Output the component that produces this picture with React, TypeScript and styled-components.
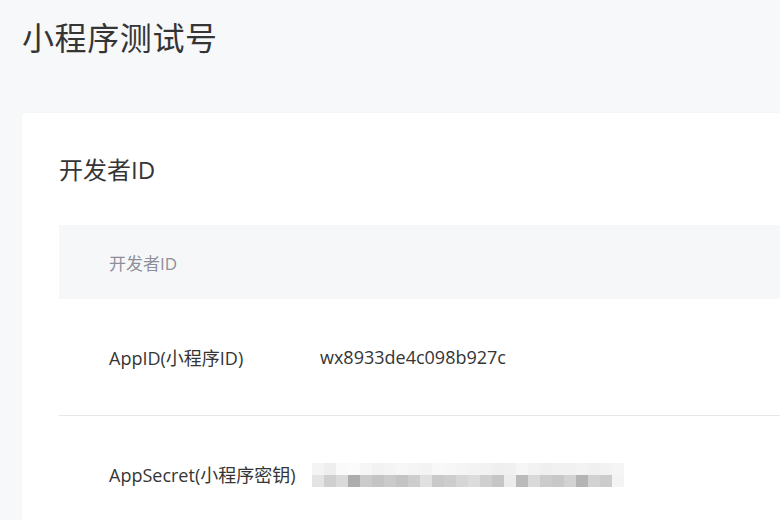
import styled, { createGlobalStyle } from "styled-components";

const GlobalStyle = createGlobalStyle`
  html, body {
    margin: 0;
    padding: 0;
    background: #f7f8fa;
    font-family: "Open Sans", "Noto Sans CJK SC", sans-serif;
    color: #353535;
    overflow: hidden;
  }
`;

const rows = [
  { label: "AppID(小程序ID)", value: "wx8933de4c098b927c" },
  { label: "AppSecret(小程序密钥)", secret: true },
];

// grey shades of the pixelated secret (top row, bottom row)
const topShades = [
  "#f4f4f4", "#eeeeee", "#fafafa", "#fbfbfb", "#f6f6f6", "#f2f2f2", "#f4f4f4",
  "#f7f7f7", "#f5f5f5", "#f3f3f3", "#f8f8f8", "#f7f7f7", "#f5f5f5", "#f3f3f3",
  "#f2f2f2", "#efefef", "#f0f0f0", "#f6f6f6", "#f2f2f2", "#efefef", "#f1f1f1",
  "#f1f1f1", "#f3f3f3", "#f0f0f0", "#f2f2f2", "#f5f5f5",
];
const bottomShades = [
  "#e4e4e4", "#cfcfcf", "#dadada", "#adadad", "#cbcbcb", "#c4c4c4", "#cacaca",
  "#c4c4c4", "#cdcdcd", "#e0e0e0", "#c9c9c9", "#cdcdcd", "#d6d6d6", "#dcdcdc",
  "#cfcfcf", "#c6c6c6", "#ececec", "#bababa", "#d9d9d9", "#cbcbcb", "#c8c8c8",
  "#d2d2d2", "#b4b4b4", "#d2d2d2", "#cccccc", "#f4f4f4",
];

export default function App() {
  return (
    <Page>
      <GlobalStyle />
      <PageTitle>小程序测试号</PageTitle>
      <Card>
        <SectionTitle>开发者ID</SectionTitle>
        <Table>
          <HeadRow>
            <HeadCell>开发者ID</HeadCell>
          </HeadRow>
          {rows.map((r, i) => (
            <Row key={r.label} last={i === rows.length - 1}>
              <Label>{r.label}</Label>
              {r.secret ? (
                <Mosaic>
                  <MosaicLine>
                    {topShades.map((c, j) => (
                      <Block key={j} style={{ background: c }} />
                    ))}
                  </MosaicLine>
                  <MosaicLine>
                    {bottomShades.map((c, j) => (
                      <Block key={j} style={{ background: c }} />
                    ))}
                  </MosaicLine>
                </Mosaic>
              ) : (
                <Value>{r.value}</Value>
              )}
            </Row>
          ))}
        </Table>
      </Card>
    </Page>
  );
}

const Page = styled.div`
  width: 780px;
  height: 520px;
  padding: 16px 0 0 22px;
  box-sizing: border-box;
`;

const PageTitle = styled.h1`
  margin: 0;
  font-size: 32px;
  font-weight: 400;
  line-height: 44px;
  letter-spacing: 0.6px;
  color: #353535;
`;

const Card = styled.div`
  margin-top: 53px;
  background: #fff;
  border-radius: 4px 0 0 0;
  padding: 37px 0 0 37px;
  box-shadow: 0 0 2px rgba(0, 0, 0, 0.03);
`;

const SectionTitle = styled.h2`
  margin: 0;
  font-size: 24px;
  font-weight: 400;
  line-height: 40px;
  color: #353535;
`;

const Table = styled.div`
  margin-top: 35px;
`;

const HeadRow = styled.div`
  height: 74px;
  background: #f6f7f9;
  display: flex;
  align-items: center;
  padding-left: 50px;
`;

const HeadCell = styled.div`
  font-size: 17px;
  color: #8d9099;
`;

const Row = styled.div<{ last?: boolean }>`
  height: 116px;
  display: flex;
  align-items: center;
  padding-left: 50px;
  border-bottom: ${({ last }) => (last ? "none" : "1px solid #e7e7eb")};
`;

const Label = styled.div`
  width: 203px;
  font-size: 18px;
  color: #353535;
  white-space: nowrap;
`;

const Value = styled.div`
  margin-left: 8px;
  font-size: 18px;
  color: #353535;
`;

const Mosaic = styled.div`
  display: flex;
  flex-direction: column;
  margin-top: 2px;
`;

const MosaicLine = styled.div`
  display: flex;
`;

const Block = styled.span`
  width: 12px;
  height: 12px;
`;
